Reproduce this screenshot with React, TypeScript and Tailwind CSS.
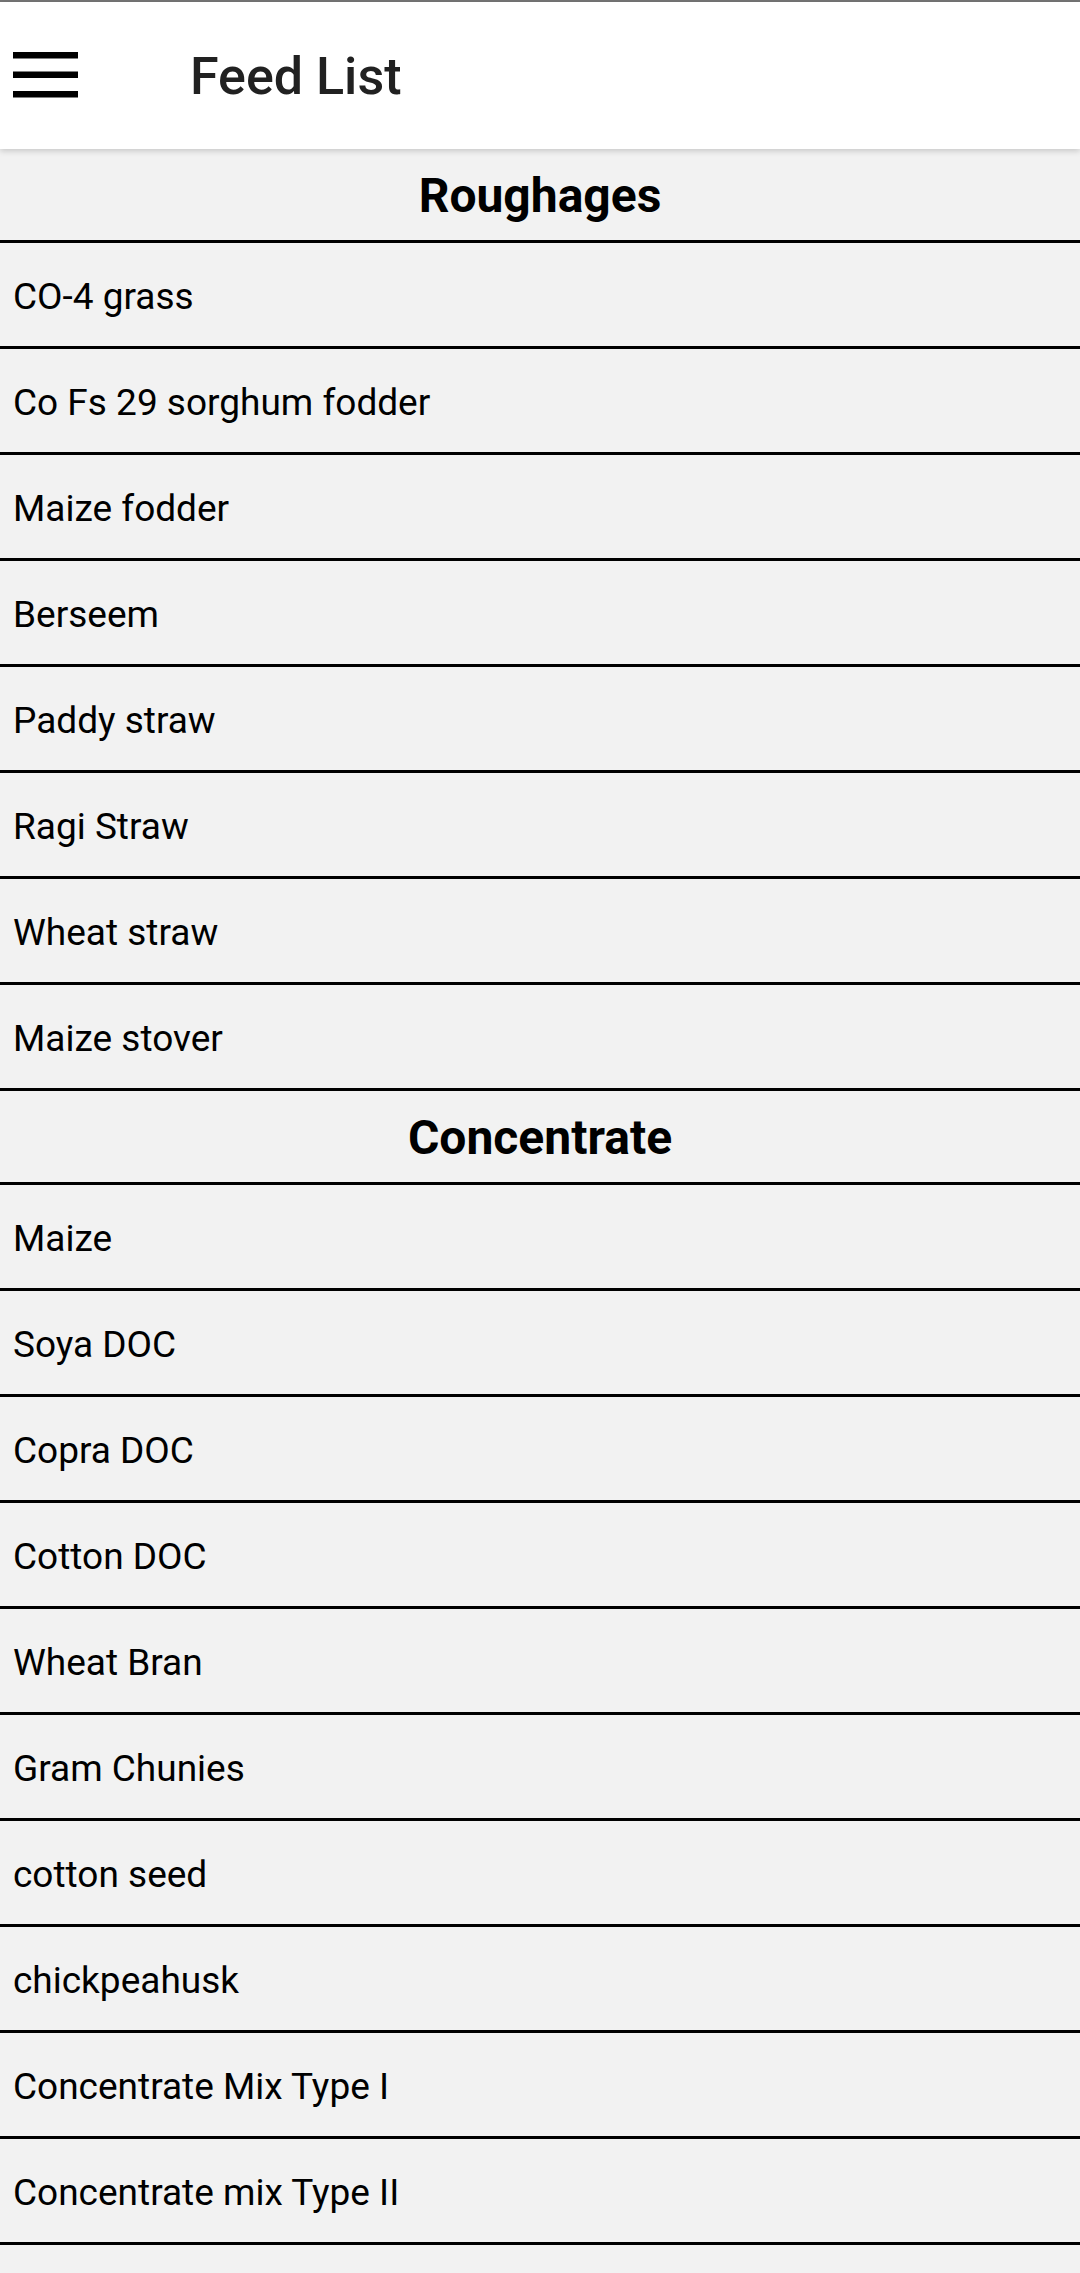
import React from 'react'

const roughages = [
  'CO-4 grass',
  'Co Fs 29 sorghum fodder',
  'Maize fodder',
  'Berseem',
  'Paddy straw',
  'Ragi Straw',
  'Wheat straw',
  'Maize stover',
]

const concentrates = [
  'Maize',
  'Soya DOC',
  'Copra DOC',
  'Cotton DOC',
  'Wheat Bran',
  'Gram Chunies',
  'cotton seed',
  'chickpeahusk',
  'Concentrate Mix Type I',
  'Concentrate mix Type II',
]

function SectionTitle({ title }: { title: string }) {
  return (
    <div className="h-[94px] flex items-center justify-center border-b-[3px] border-black">
      <h2 className="text-[48px] font-bold text-black leading-none pt-[2px]">{title}</h2>
    </div>
  )
}

function FeedRow({ name }: { name: string }) {
  return (
    <div className="h-[106px] flex items-center px-[13px] border-b-[3px] border-black">
      <span className="text-[37px] text-black leading-none pt-[4px]">{name}</span>
    </div>
  )
}

export default function App() {
  return (
    <div
      className="min-h-screen bg-[#f2f2f2]"
      style={{ fontFamily: 'Roboto, "Noto Sans", Arial, sans-serif' }}
    >
      <div className="h-[2px] bg-[#757575]" />

      {/* Toolbar */}
      <header className="relative z-10 h-[147px] bg-white flex items-center shadow-[0_2px_6px_rgba(0,0,0,0.18)]">
        <button className="w-[78px] h-[147px] flex items-center pl-[13px]" aria-label="menu">
          <svg width="65" height="47" viewBox="0 0 65 47">
            <rect x="0" y="0" width="65" height="6.5" fill="#000" />
            <rect x="0" y="19.5" width="65" height="6.5" fill="#000" />
            <rect x="0" y="39" width="65" height="6.5" fill="#000" />
          </svg>
        </button>
        <h1 className="ml-[112px] text-[52px] font-medium text-[#212121] leading-none pt-[3px]">Feed List</h1>
      </header>

      <SectionTitle title="Roughages" />
      {roughages.map(r => (
        <FeedRow key={r} name={r} />
      ))}

      <SectionTitle title="Concentrate" />
      {concentrates.map(c => (
        <FeedRow key={c} name={c} />
      ))}
    </div>
  )
}
